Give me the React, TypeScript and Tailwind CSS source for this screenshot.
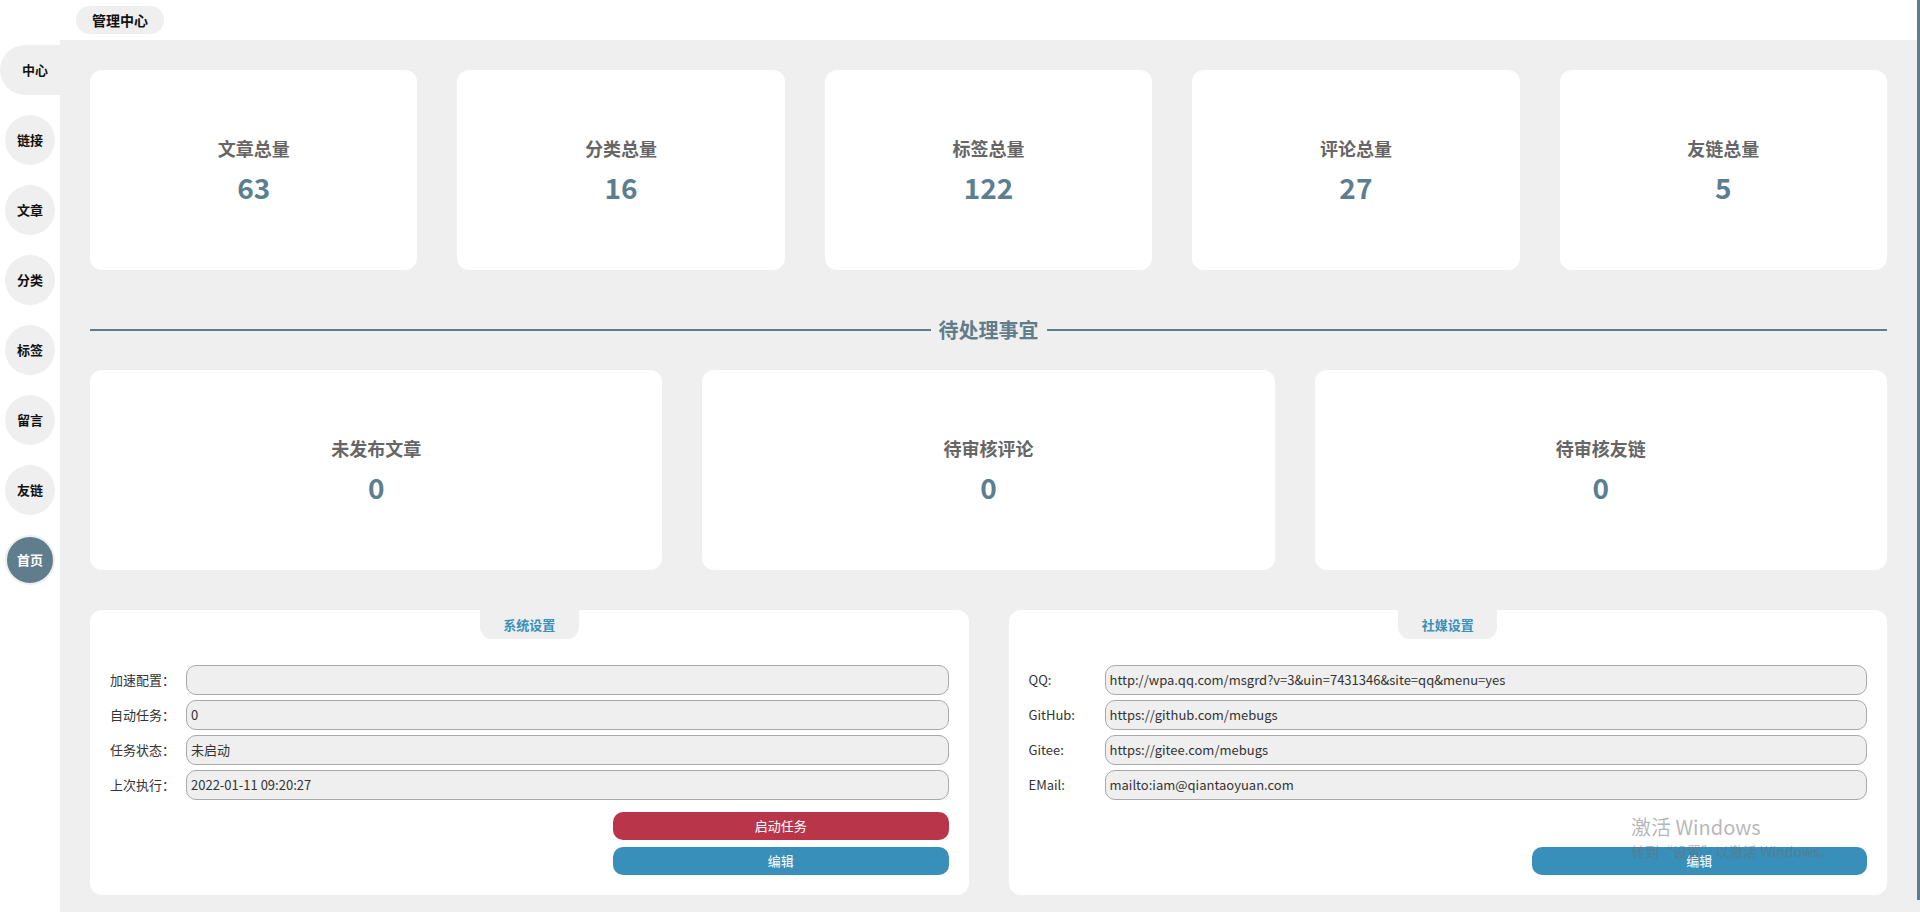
import React from "react";

const stats = [
  { label: "文章总量", value: 63 },
  { label: "分类总量", value: 16 },
  { label: "标签总量", value: 122 },
  { label: "评论总量", value: 27 },
  { label: "友链总量", value: 5 },
];

const pending = [
  { label: "未发布文章", value: 0 },
  { label: "待审核评论", value: 0 },
  { label: "待审核友链", value: 0 },
];

const navItems = ["链接", "文章", "分类", "标签", "留言", "友链"];

const systemFields = [
  { label: "加速配置：", value: "" },
  { label: "自动任务：", value: "0" },
  { label: "任务状态：", value: "未启动" },
  { label: "上次执行：", value: "2022-01-11 09:20:27" },
];

const socialFields = [
  { label: "QQ:", value: "http://wpa.qq.com/msgrd?v=3&uin=7431346&site=qq&menu=yes" },
  { label: "GitHub:", value: "https://github.com/mebugs" },
  { label: "Gitee:", value: "https://gitee.com/mebugs" },
  { label: "EMail:", value: "mailto:iam@qiantaoyuan.com" },
];

function StatCard({ label, value }: { label: string; value: number }) {
  return (
    <div className="flex h-[200px] flex-col items-center justify-center rounded-[12px] bg-white">
      <div className="text-[18px] leading-[24px] font-bold text-[#666666]">{label}</div>
      <div className="mt-[10px] text-[28px] leading-[34px] font-bold text-[#5b7e91]">{value}</div>
    </div>
  );
}

function Field({ label, value }: { label: string; value: string }) {
  return (
    <div className="flex items-center">
      <div className="w-[76px] shrink-0 text-[13px] text-[#333333]">{label}</div>
      <div className="flex h-[30px] flex-1 items-center rounded-[10px] border border-[#a9a9a9] bg-[#efefef] px-[4px] text-[13px] text-[#333333]">
        {value}
      </div>
    </div>
  );
}

function Panel({
  title,
  fields,
  showStart,
}: {
  title: string;
  fields: { label: string; value: string }[];
  showStart: boolean;
}) {
  return (
    <div className="flex h-[285px] flex-col rounded-[12px] bg-white px-[20px] pb-[20px]">
      <div className="mx-auto flex h-[29px] w-[99px] items-center justify-center rounded-b-[12px] bg-[#efefef] text-[13px] font-bold text-[#3a8fbb]">
        {title}
      </div>
      <div className="mt-[26px] flex flex-col gap-[5px]">
        {fields.map((f) => (
          <Field key={f.label} label={f.label} value={f.value} />
        ))}
      </div>
      <div className="mt-[12px] flex flex-col items-end gap-[7px]">
        {showStart ? (
          <button
            type="button"
            className="h-[28px] w-[40%] rounded-[10px] bg-[#b9364a] text-[13px] text-white"
          >
            启动任务
          </button>
        ) : (
          <div className="h-[28px]" />
        )}
        <button
          type="button"
          className="h-[28px] w-[40%] rounded-[10px] bg-[#378fba] text-[13px] text-white"
        >
          编辑
        </button>
      </div>
    </div>
  );
}

export default function App() {
  return (
    <div
      className="relative flex h-[912px] w-full overflow-hidden bg-white"
      style={{ fontFamily: '"Noto Sans CJK SC", "Noto Sans", sans-serif' }}
    >
      <div className="flex flex-1 flex-col">
        <header className="h-[40px] shrink-0 bg-white pl-[76px] pt-[6px]">
          <div className="flex h-[28px] w-[88px] items-center justify-center rounded-full bg-[#efefef] text-[14px] font-bold text-[#111111]">
            管理中心
          </div>
        </header>

        <div className="flex flex-1">
          <aside className="flex w-[60px] shrink-0 flex-col gap-[20px] bg-white pt-[5px]">
            <div className="flex h-[50px] w-[60px] items-center justify-center rounded-l-full bg-[#efefef] pl-[10px] text-[13px] font-bold text-[#111111]">
              中心
            </div>
            {navItems.map((n) => (
              <div
                key={n}
                className="ml-[5px] flex h-[50px] w-[50px] items-center justify-center rounded-full bg-[#efefef] text-[13px] font-bold text-[#111111]"
              >
                {n}
              </div>
            ))}
            <div className="ml-[5px] flex h-[50px] w-[50px] items-center justify-center rounded-full border-2 border-[#eeeeee] bg-[#5f7d8c] text-[13px] font-bold text-white">
              首页
            </div>
          </aside>

          <main className="flex-1 bg-[#efefef] px-[30px] pt-[30px]">
            <div className="grid grid-cols-5 gap-[40px]">
              {stats.map((s) => (
                <StatCard key={s.label} label={s.label} value={s.value} />
              ))}
            </div>

            <div className="flex items-center gap-[8px] pt-[50px] pb-[30px]">
              <div className="h-[2px] flex-1 bg-[#607d8b]" />
              <div className="text-[20px] leading-[20px] font-bold text-[#607d8b]">待处理事宜</div>
              <div className="h-[2px] flex-1 bg-[#607d8b]" />
            </div>

            <div className="grid grid-cols-3 gap-[40px]">
              {pending.map((s) => (
                <StatCard key={s.label} label={s.label} value={s.value} />
              ))}
            </div>

            <div className="mt-[40px] grid grid-cols-2 gap-[40px]">
              <Panel title="系统设置" fields={systemFields} showStart />
              <Panel title="社媒设置" fields={socialFields} showStart={false} />
            </div>
          </main>
        </div>
      </div>

      <div className="w-[3px] shrink-0 bg-[#efefef]">
        <div className="h-[900px] w-[3px] bg-[#5f7d8c]" />
      </div>

      {/* windows watermark */}
      <div className="pointer-events-none absolute left-[1631px] top-[813px] text-[rgba(110,110,110,0.5)]">
        <div className="text-[20px] leading-[28px]">激活 Windows</div>
        <div className="text-[14px] leading-[20px]">转到“设置”以激活 Windows。</div>
      </div>
    </div>
  );
}
